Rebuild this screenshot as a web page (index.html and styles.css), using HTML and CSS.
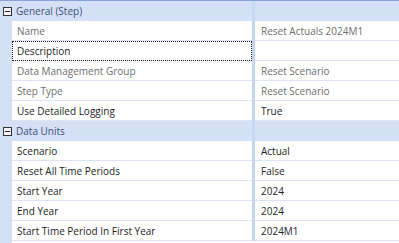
FILE: index.html
```html
<!DOCTYPE html>
<html>
<head>
<meta charset="utf-8">
<link rel="stylesheet" href="styles.css">
</head>
<body>
<div class="grid">
  <div class="group">
    <div class="gh"><div class="ghl"><span class="exp"></span><span class="gt">General (Step)</span></div><div class="sp"></div><div class="ghr"></div></div>
    <div class="row ro"><div class="gut"></div><div class="nm">Name</div><div class="sp"></div><div class="vl">Reset Actuals 2024M1</div></div>
    <div class="row"><div class="gut"></div><div class="nm focus">Description</div><div class="sp"></div><div class="vl"></div></div>
    <div class="row ro"><div class="gut"></div><div class="nm">Data Management Group</div><div class="sp"></div><div class="vl">Reset Scenario</div></div>
    <div class="row ro"><div class="gut"></div><div class="nm">Step Type</div><div class="sp"></div><div class="vl">Reset Scenario</div></div>
    <div class="row"><div class="gut"></div><div class="nm">Use Detailed Logging</div><div class="sp"></div><div class="vl">True</div></div>
  </div>
  <div class="group">
    <div class="gh"><div class="ghl"><span class="exp"></span><span class="gt">Data Units</span></div><div class="sp"></div><div class="ghr"></div></div>
    <div class="row"><div class="gut"></div><div class="nm">Scenario</div><div class="sp"></div><div class="vl">Actual</div></div>
    <div class="row"><div class="gut"></div><div class="nm">Reset All Time Periods</div><div class="sp"></div><div class="vl">False</div></div>
    <div class="row"><div class="gut"></div><div class="nm">Start Year</div><div class="sp"></div><div class="vl">2024</div></div>
    <div class="row"><div class="gut"></div><div class="nm">End Year</div><div class="sp"></div><div class="vl">2024</div></div>
    <div class="row"><div class="gut"></div><div class="nm">Start Time Period In First Year</div><div class="sp"></div><div class="vl">2024M1</div></div>
  </div>
  <div class="tail"><div class="gut"></div><div class="fill"></div></div>
</div>
</body>
</html>
```
FILE: styles.css
```css
* { box-sizing: border-box; }
html, body { margin: 0; padding: 0; background: #ffffff; }
body {
  width: 399px;
  height: 243px;
  overflow: hidden;
  font-family: "Open Sans", "Noto Sans", sans-serif;
  font-size: 10px;
  color: #1e1e1e;
}
.grid {
  border-top: 1px solid #88a5da;
  display: flex;
  flex-direction: column;
}
.gh {
  height: 20px;
  background: #d4e0f6;
  display: grid;
  grid-template-columns: 252px 3px 1fr;
  color: #3c4e78;
}
.ghl {
  display: flex;
  align-items: center;
}
.gh .sp { background: #c9d7f0; }
.exp {
  width: 9px;
  height: 9px;
  margin-left: 3px;
  margin-right: 4px;
  border: 1px solid #333;
  background: #f4f6fa;
  position: relative;
}
.exp::after {
  content: "";
  position: absolute;
  left: 1px;
  right: 1px;
  top: 3px;
  height: 1px;
  background: #222;
}
.row {
  height: 20px;
  display: grid;
  grid-template-columns: 12px 240px 3px 1fr;
}
.gut { background: #d4e0f6; }
.nm, .vl {
  border-bottom: 1px solid #dde5f4;
  display: flex;
  align-items: center;
  white-space: nowrap;
  overflow: hidden;
}
.nm { padding-left: 5px; }
.vl { padding-left: 6px; }
.sp { background: #c6d5ef; }
.ro .nm, .ro .vl { color: #6e6e6e; }
.focus {
  outline: 1px dotted #222;
  outline-offset: -1px;
}
.tail {
  height: 2px;
  display: grid;
  grid-template-columns: 12px 1fr;
}
```
